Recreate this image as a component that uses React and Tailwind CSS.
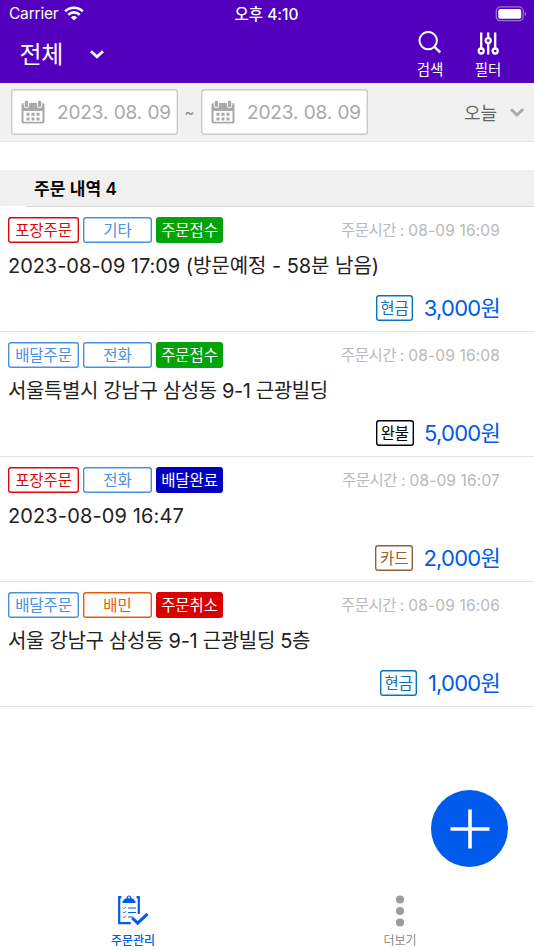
import React from "react";
import clsx from "clsx";

const orders = [
  {
    id: 1,
    type: "포장주문",
    channel: "기타",
    status: "주문접수",
    time: "08-09 16:09",
    title: "2023-08-09 17:09 (방문예정 - 58분 남음)",
    titleClass: "tracking-[-0.05px]",
    pay: "현금",
    amount: "3,000",
  },
  {
    id: 2,
    type: "배달주문",
    channel: "전화",
    status: "주문접수",
    time: "08-09 16:08",
    title: "서울특별시 강남구 삼성동 9-1 근광빌딩",
    titleClass: "tracking-[-0.38px]",
    pay: "완불",
    amount: "5,000",
  },
  {
    id: 3,
    type: "포장주문",
    channel: "전화",
    status: "배달완료",
    time: "08-09 16:07",
    title: "2023-08-09 16:47",
    titleClass: "tracking-[0.12px]",
    pay: "카드",
    amount: "2,000",
  },
  {
    id: 4,
    type: "배달주문",
    channel: "배민",
    status: "주문취소",
    time: "08-09 16:06",
    title: "서울 강남구 삼성동 9-1 근광빌딩 5층",
    titleClass: "tracking-[-0.32px]",
    pay: "현금",
    amount: "1,000",
  },
];

const typeColors = {
  포장주문: "text-[#d9080d]",
  배달주문: "text-[#4a90e2]",
};

const channelColors = {
  기타: "text-[#4a90e2]",
  전화: "text-[#4a90e2]",
  배민: "text-[#eb5a0c]",
};

const statusColors = {
  주문접수: "bg-[#05a30a]",
  배달완료: "bg-[#0300bd]",
  주문취소: "bg-[#db0000]",
};

const payColors = {
  현금: "text-[#0b73bd]",
  완불: "text-black",
  카드: "text-[#935f35]",
};

function Tag({ outline, className, children }) {
  return (
    <span
      className={clsx(
        "flex h-[26px] items-center justify-center rounded-[3px] pt-0.5 text-[15.5px] leading-none tracking-[-0.1px] whitespace-nowrap",
        outline && "shadow-[inset_0_0_0_1.4px_currentColor]",
        className
      )}
    >
      {children}
    </span>
  );
}

function StatusBar() {
  return (
    <div className="grid h-[27px] grid-cols-3 items-center pr-[7px] pl-[9px] text-[15.5px] leading-none">
      <div className="flex items-center gap-[6px]">
        <span className="pt-px tracking-[-0.2px]">Carrier</span>
        <svg width="20" height="15" viewBox="0 0 20 15" fill="none" stroke="#fff" strokeWidth="2.6">
          <path d="M1.2 5.3a12.5 12.5 0 0 1 17.6 0" />
          <path d="M4.3 8.8a8 8 0 0 1 11.4 0" />
          <path d="M10 14.6 6.9 11.4a4.4 4.4 0 0 1 6.2 0Z" fill="#fff" stroke="none" />
        </svg>
      </div>
      <span className="pt-0.5 pr-[3px] text-center font-medium">오후 4:10</span>
      <svg className="justify-self-end" width="32" height="16" viewBox="0 0 32 16" fill="none">
        <rect x="1.3" y="0.9" width="26.9" height="13.8" rx="4" stroke="#fff" strokeOpacity="0.45" strokeWidth="1.2" />
        <rect x="3.3" y="2.9" width="22.9" height="9.8" rx="2" fill="#fff" />
        <path d="M29.8 5.5c1.8.8 1.8 3.8 0 4.6Z" fill="#fff" fillOpacity="0.5" />
      </svg>
    </div>
  );
}

function Header() {
  return (
    <header className="h-[83px] bg-[#5200bd] text-white">
      <StatusBar />
      <div className="flex h-14 justify-between pr-[28px] pl-[19.5px]">
        <button className="flex h-[55px] items-center gap-[26.5px]">
          <span className="pt-px text-[24px] leading-none tracking-[-0.3px]">전체</span>
          <svg width="14" height="9" viewBox="0 0 14 9" fill="none" stroke="#fff" strokeWidth="2.8">
            <path d="m1 1.2 6 5.6 6-5.6" />
          </svg>
        </button>
        <div className="flex gap-[22px] pt-1">
          <button className="flex w-9 flex-col items-center gap-2">
            <svg width="24" height="24" viewBox="0 0 24 24" fill="none" stroke="#fff" strokeWidth="2">
              <circle cx="10.2" cy="9.6" r="8.7" />
              <path d="m16.2 15.6 6 5.8" strokeWidth="2.4" />
            </svg>
            <span className="text-[14.5px] leading-none">검색</span>
          </button>
          <button className="flex w-9 flex-col items-center gap-2">
            <svg width="22" height="24" viewBox="0 0 22 24" fill="none" stroke="#fff" strokeWidth="2.3">
              <path d="M4.2 1.5v16M11.2 1.5v5.5M11.2 12.5v11M18.2 1.5v16" />
              <circle cx="4.2" cy="20" r="2.5" />
              <circle cx="11.2" cy="9.6" r="2.5" />
              <circle cx="18.2" cy="20" r="2.5" />
            </svg>
            <span className="text-[14.5px] leading-none">필터</span>
          </button>
        </div>
      </div>
    </header>
  );
}

function CalendarIcon() {
  return (
    <svg width="24" height="24" viewBox="0 0 24 24" fill="#a9a9a9">
      <path d="M2.5 3h19a2 2 0 0 1 2 2v16.5a2 2 0 0 1-2 2h-19a2 2 0 0 1-2-2V5a2 2 0 0 1 2-2Z" />
      <path d="M2.5 11h19v10a.8.8 0 0 1-.8.8H3.3a.8.8 0 0 1-.8-.8Z" fill="#fff" />
      <g stroke="#fff" strokeWidth="1">
        <rect x="3.2" y="0.2" width="4.4" height="7.5" rx="2" />
        <rect x="16.4" y="0.2" width="4.4" height="7.5" rx="2" />
      </g>
      <path d="M5.5 12.8h3v3h-3zM10.5 12.8h3v3h-3zM15.5 12.8h3v3h-3zM5.5 17.5h3v3h-3zM10.5 17.5h3v3h-3zM15.5 17.5h3v3h-3z" />
    </svg>
  );
}

function DateField({ value }) {
  return (
    <button className="flex h-[46px] w-[167px] items-center gap-[12.5px] rounded-[3px] bg-white pl-[9.5px] text-[19px] text-[#a8a8a8] shadow-[inset_0_0_0_1.4px_#cacaca]">
      <CalendarIcon />
      <span className="pt-px leading-none tracking-[-0.1px] whitespace-nowrap">{value}</span>
    </button>
  );
}

function DateFilter() {
  return (
    <div className="flex h-[59px] items-center border-b border-[#e4e4e4] bg-[#f1f1f1] pr-[10px] pl-[11px]">
      <DateField value="2023. 08. 09" />
      <span className="w-[23px] text-center text-[15px] leading-none text-[#8a8a8a]">~</span>
      <DateField value="2023. 08. 09" />
      <button className="ml-auto flex items-center gap-[13px] text-[#666]">
        <span className="pt-[3px] text-[18px] leading-none">오늘</span>
        <svg width="14" height="9" viewBox="0 0 14 9" fill="none" stroke="#aaa" strokeWidth="2.8">
          <path d="m1 1.2 6 5.8 6-5.8" />
        </svg>
      </button>
    </div>
  );
}

function OrderRow({ order }) {
  return (
    <li className="h-[125.1px] border-b border-[#e2e2e2] pt-[9.5px] pr-[34px] pl-2">
      <div className="flex items-center gap-1">
        <Tag outline className={clsx("w-[71px]", typeColors[order.type])}>{order.type}</Tag>
        <Tag outline className={clsx("w-[69px]", channelColors[order.channel])}>{order.channel}</Tag>
        <Tag className={clsx("w-[67px] text-white", statusColors[order.status])}>{order.status}</Tag>
        <span className="ml-auto pt-0.5 text-[15.5px] leading-none whitespace-nowrap text-[#b9b9b9]">
          <span className="tracking-[-0.5px]">주문시간 :</span>
          <span className="tracking-[0.15px]"> {order.time}</span>
        </span>
      </div>
      <p className={clsx("mt-[9px] h-7 text-[20px] leading-7 whitespace-nowrap text-[#222]", order.titleClass)}>
        {order.title}
      </p>
      <div className="mt-[15px] flex items-center justify-end gap-[10.5px]">
        <Tag outline className={clsx("w-[37.5px]", payColors[order.pay])}>{order.pay}</Tag>
        <span className="pt-px text-[22px] leading-none tracking-[-0.75px] text-[#005aeb]">{order.amount}원</span>
      </div>
    </li>
  );
}

function TabBar() {
  return (
    <nav className="mt-auto grid h-[58px] grid-cols-2 text-[12px] leading-none">
      <button className="flex flex-col items-center gap-[7px] pr-px text-[#005aeb]">
        <svg width="34" height="36" viewBox="0 0 34 36" fill="none" stroke="#005aeb">
          <path d="M14.8 31.2H3.2V5.2H22.8V22" strokeWidth="2.2" />
          <path d="M5.5 3.500h15v8h-15z" fill="#fff" stroke="none" />
          <path d="M6.500 11V9.500L9 6.500h1.700a2.400 2.400 0 1 1 4.600 0H17l2.500 3V11Z" fill="#005aeb" stroke="none" />
          <circle cx="13" cy="5.400" r="1" fill="#fff" stroke="none" />
          <path d="M12 16h8M12 20.500h8M12 25h5" strokeWidth="1.2" />
          <path d="m7 15.700 1 1 2-2M7 20.200l1 1 2-2M7 24.700l1 1 2-2" strokeWidth="0.9" />
          <path d="m16.2 26 5.5 5.2 9.8-9.4" strokeWidth="3" />
        </svg>
        <span className="text-[12px] font-medium">주문관리</span>
      </button>
      <button className="flex flex-col items-center gap-[7px] pr-px text-[#8c8c8c]">
        <svg width="10" height="36" viewBox="0 0 10 36" fill="#9b9b9b">
          <circle cx="5" cy="7.5" r="4" />
          <circle cx="5" cy="19" r="4" />
          <circle cx="5" cy="30.5" r="4" />
        </svg>
        <span>더보기</span>
      </button>
    </nav>
  );
}

export default function App() {
  return (
    <div className="relative flex h-[950px] w-[534px] flex-col overflow-hidden bg-white font-['Inter','Noto_Sans_CJK_KR',sans-serif]">
      <Header />
      <DateFilter />
      <div className="mt-7 flex h-9 items-center bg-[#f0f0f0] pl-[34px]">
        <h2 className="pt-0.5 text-[17px] leading-none font-semibold tracking-[0.05px] text-black">주문 내역 4</h2>
      </div>
      <div className="ml-[26px] h-px shrink-0 bg-[#d8d8d8]" />
      <ul>
        {orders.map((order) => (
          <OrderRow key={order.id} order={order} />
        ))}
      </ul>
      <button className="absolute right-[26px] bottom-[83px] flex size-[77px] items-center justify-center rounded-full bg-[#005aeb]">
        <svg width="40" height="40" viewBox="0 0 40 40" stroke="#fff" strokeWidth="3.6">
          <path d="M20 0.5v39M0.5 20h39" />
        </svg>
      </button>
      <TabBar />
    </div>
  );
}
